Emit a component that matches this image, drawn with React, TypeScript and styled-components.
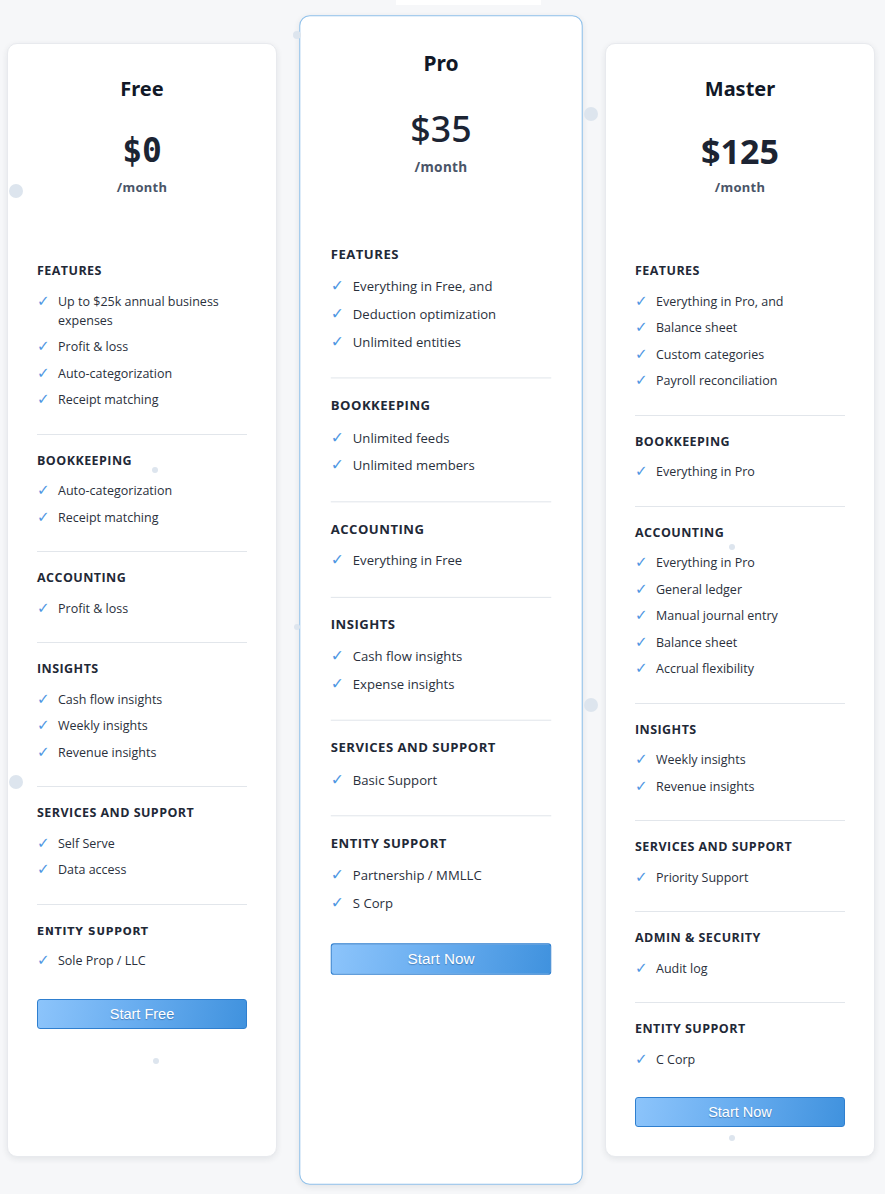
import React from "react";
import styled, { createGlobalStyle } from "styled-components";

const GlobalStyle = createGlobalStyle`
  html, body {
    margin: 0;
    padding: 0;
    background: #f6f7f9;
  }
  * {
    box-sizing: border-box;
  }
`;

type PriceStyle = "mono" | "regular" | "bold";

type Section = {
  title: string;
  items: string[];
  small?: boolean;
};

type Plan = {
  name: string;
  price: string;
  priceStyle: PriceStyle;
  cta: string;
  featured?: boolean;
  sections: Section[];
};

const plans: Plan[] = [
  {
    name: "Free",
    price: "$0",
    priceStyle: "mono",
    cta: "Start Free",
    sections: [
      {
        title: "Features",
        items: [
          "Up to $25k annual business expenses",
          "Profit & loss",
          "Auto-categorization",
          "Receipt matching",
        ],
      },
      { title: "Bookkeeping", items: ["Auto-categorization", "Receipt matching"] },
      { title: "Accounting", items: ["Profit & loss"] },
      {
        title: "Insights",
        items: ["Cash flow insights", "Weekly insights", "Revenue insights"],
      },
      { title: "Services and Support", items: ["Self Serve", "Data access"] },
      { title: "Entity Support", items: ["Sole Prop / LLC"], small: true },
    ],
  },
  {
    name: "Pro",
    price: "$35",
    priceStyle: "regular",
    cta: "Start Now",
    featured: true,
    sections: [
      {
        title: "Features",
        items: ["Everything in Free, and", "Deduction optimization", "Unlimited entities"],
      },
      { title: "Bookkeeping", items: ["Unlimited feeds", "Unlimited members"] },
      { title: "Accounting", items: ["Everything in Free"] },
      { title: "Insights", items: ["Cash flow insights", "Expense insights"] },
      { title: "Services and Support", items: ["Basic Support"] },
      { title: "Entity Support", items: ["Partnership / MMLLC", "S Corp"] },
    ],
  },
  {
    name: "Master",
    price: "$125",
    priceStyle: "bold",
    cta: "Start Now",
    sections: [
      {
        title: "Features",
        items: [
          "Everything in Pro, and",
          "Balance sheet",
          "Custom categories",
          "Payroll reconciliation",
        ],
      },
      { title: "Bookkeeping", items: ["Everything in Pro"] },
      {
        title: "Accounting",
        items: [
          "Everything in Pro",
          "General ledger",
          "Manual journal entry",
          "Balance sheet",
          "Accrual flexibility",
        ],
      },
      { title: "Insights", items: ["Weekly insights", "Revenue insights"] },
      { title: "Services and Support", items: ["Priority Support"] },
      { title: "Admin & Security", items: ["Audit log"] },
      { title: "Entity Support", items: ["C Corp"] },
    ],
  },
];

// floating background dots, placed where they sit on the canvas
const dots = [
  { x: 16, y: 191, r: 7 },
  { x: 155, y: 470, r: 3 },
  { x: 16, y: 782, r: 7 },
  { x: 156, y: 1061, r: 3 },
  { x: 297, y: 35, r: 4 },
  { x: 297, y: 627, r: 3 },
  { x: 591, y: 114, r: 7 },
  { x: 591, y: 705, r: 7 },
  { x: 732, y: 547, r: 3 },
  { x: 732, y: 1138, r: 3 },
];

const Page = styled.div`
  position: relative;
  min-height: 1194px;
  display: flex;
  align-items: stretch;
  gap: 29px;
  padding: 43px 10px 38px 7px;
  overflow: hidden;
`;

const TopStrip = styled.div`
  position: absolute;
  top: 0;
  left: 396px;
  width: 145px;
  height: 5px;
  background: #ffffff;
`;

const Dot = styled.span<{ $r: number }>`
  position: absolute;
  width: ${(p) => p.$r * 2}px;
  height: ${(p) => p.$r * 2}px;
  margin: ${(p) => -p.$r}px 0 0 ${(p) => -p.$r}px;
  border-radius: 50%;
  background: #dde5ee;
  z-index: 2;
`;

const Card = styled.div<{ $featured?: boolean }>`
  width: 270px;
  flex: 0 0 270px;
  display: flex;
  flex-direction: column;
  background: #ffffff;
  border-radius: 10px;
  padding: 29px 29px 29px;
  border: 1px solid ${(p) => (p.$featured ? "#8fc0ea" : "#e8eaee")};
  box-shadow: 0 2px 6px rgba(30, 41, 59, 0.09);
  transform: ${(p) => (p.$featured ? "scale(1.05)" : "none")};
  transform-origin: center center;
  z-index: ${(p) => (p.$featured ? 1 : 0)};
`;

const Header = styled.div`
  text-align: center;
  padding-bottom: 49px;
`;

const PlanName = styled.div`
  font-family: "Noto Sans", "Open Sans", sans-serif;
  font-weight: 700;
  font-size: 20px;
  line-height: 34px;
  color: #111827;
  margin-top: -1px;
`;

const Price = styled.div<{ $kind: PriceStyle }>`
  margin-top: 25px;
  line-height: 40px;
  font-size: ${(p) => (p.$kind === "mono" ? "33px" : "34px")};
  color: #1c2433;
  font-family: ${(p) =>
    p.$kind === "mono" ? `"DejaVu Sans Mono", monospace` : `"Noto Sans", sans-serif`};
  font-weight: ${(p) => (p.$kind === "regular" ? 500 : 700)};
`;

const Period = styled.div`
  margin-top: 7px;
  font-family: "Noto Sans", "Open Sans", sans-serif;
  font-weight: 700;
  font-size: 13px;
  line-height: 18px;
  color: #4a5568;
  letter-spacing: 0.3px;
`;

const Block = styled.div`
  padding: 17px 0 24.5px;
  border-bottom: 1px solid #e2e6eb;

  &:last-of-type {
    border-bottom: none;
    padding-bottom: 0;
  }
`;

const BlockTitle = styled.div<{ $small?: boolean }>`
  font-family: ${(p) =>
    p.$small ? `"DejaVu Sans", sans-serif` : `"Open Sans", "Noto Sans", sans-serif`};
  font-weight: 700;
  font-size: ${(p) => (p.$small ? "10.5px" : "12.5px")};
  letter-spacing: ${(p) => (p.$small ? "0.8px" : "0.45px")};
  line-height: 18px;
  text-transform: uppercase;
  color: #1f2937;
  margin-bottom: 11.5px;
`;

const List = styled.ul`
  list-style: none;
  margin: 0;
  padding: 0;
  display: flex;
  flex-direction: column;
  gap: 7.5px;
`;

const Item = styled.li`
  display: flex;
  align-items: flex-start;
  font-family: "Open Sans", "Noto Sans", sans-serif;
  font-size: 12.5px;
  line-height: 19px;
  color: #2a303c;
`;

const Check = styled.span`
  flex: 0 0 21px;
  font-family: "DejaVu Sans", sans-serif;
  font-size: 15px;
  line-height: 19px;
  color: #4f97e3;
`;

const Cta = styled.button`
  margin-top: 28.5px;
  width: 100%;
  height: 30px;
  border: 1px solid #2f7fcf;
  border-radius: 3px;
  background: linear-gradient(100deg, #8cc4fb 0%, #6aaef0 45%, #4092de 100%);
  color: #ffffff;
  font-family: "Liberation Sans", Arial, sans-serif;
  font-size: 14.5px;
  line-height: 28px;
  text-shadow: 0 1px 1px rgba(0, 40, 90, 0.35);
  padding: 0;
  cursor: pointer;
`;

function PlanCard({ plan }: { plan: Plan }) {
  return (
    <Card $featured={plan.featured}>
      <Header>
        <PlanName>{plan.name}</PlanName>
        <Price $kind={plan.priceStyle}>{plan.price}</Price>
        <Period>/month</Period>
      </Header>
      {plan.sections.map((section) => (
        <Block key={section.title}>
          <BlockTitle $small={section.small}>{section.title}</BlockTitle>
          <List>
            {section.items.map((item) => (
              <Item key={item}>
                <Check>✓</Check>
                <span>{item}</span>
              </Item>
            ))}
          </List>
        </Block>
      ))}
      <Cta>{plan.cta}</Cta>
    </Card>
  );
}

function App() {
  return (
    <>
      <GlobalStyle />
      <Page>
        <TopStrip />
        {plans.map((plan) => (
          <PlanCard key={plan.name} plan={plan} />
        ))}
        {dots.map((d, i) => (
          <Dot key={i} $r={d.r} style={{ left: d.x, top: d.y }} />
        ))}
      </Page>
    </>
  );
}

export default App;
